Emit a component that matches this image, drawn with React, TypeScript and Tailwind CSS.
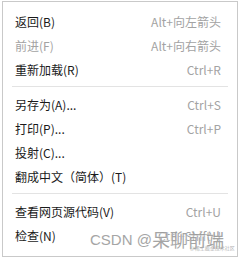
import React from "react";

type Item = { label: string; shortcut?: string; disabled?: boolean } | "sep";

const items: Item[] = [
  { label: "返回(B)", shortcut: "Alt+向左箭头" },
  { label: "前进(F)", shortcut: "Alt+向右箭头", disabled: true },
  { label: "重新加载(R)", shortcut: "Ctrl+R" },
  "sep",
  { label: "另存为(A)...", shortcut: "Ctrl+S" },
  { label: "打印(P)...", shortcut: "Ctrl+P" },
  { label: "投射(C)..." },
  { label: "翻成中文（简体）(T)" },
  "sep",
  { label: "查看网页源代码(V)", shortcut: "Ctrl+U" },
  { label: "检查(N)", shortcut: "Ctrl+Shift+I" },
];

export default function App() {
  return (
    <div
      className="relative w-[241px] h-[259px] bg-white"
      style={{ fontFamily: '"Noto Sans CJK SC", "Noto Sans", sans-serif' }}
    >
      <div className="absolute left-[2px] top-[1px] w-[236px] h-[256px] border border-[#c9c9c9] bg-white pt-[8px] pb-[7px] flex flex-col">
        {items.map((it, i) =>
          it === "sep" ? (
            <div key={i} className="mx-[9px] mt-[4px] mb-[6px] h-px bg-[#e3e3e3]" />
          ) : (
            <div
              key={i}
              className="h-[24px] flex items-center justify-between pl-[12px] pr-[16px] text-[12px] leading-none"
            >
              <span className={it.disabled ? "text-[#a3a3a3]" : "text-[#1a1a1a]"}>{it.label}</span>
              {it.shortcut && <span className="text-[#a3a3a3]">{it.shortcut}</span>}
            </div>
          )
        )}
      </div>
      <div
        className="absolute left-[90px] top-[230px] flex items-center leading-none text-[#9c9c9c] whitespace-nowrap"
        style={{ textShadow: "0 0 1px #fff, 0 0 1px #fff", opacity: 0.9 }}
      >
        <span className="text-[15px]" style={{ fontFamily: '"Liberation Sans", sans-serif' }}>
          CSDN @
        </span>
        <span className="text-[18px]" style={{ fontFamily: '"Noto Sans CJK SC", sans-serif' }}>
          呆聊前端
        </span>
      </div>
      <div className="absolute left-[190px] top-[245px] text-[5px] leading-none text-[#b0b0b0] whitespace-nowrap">
        @稀土掘金技术社区
      </div>
    </div>
  );
}
